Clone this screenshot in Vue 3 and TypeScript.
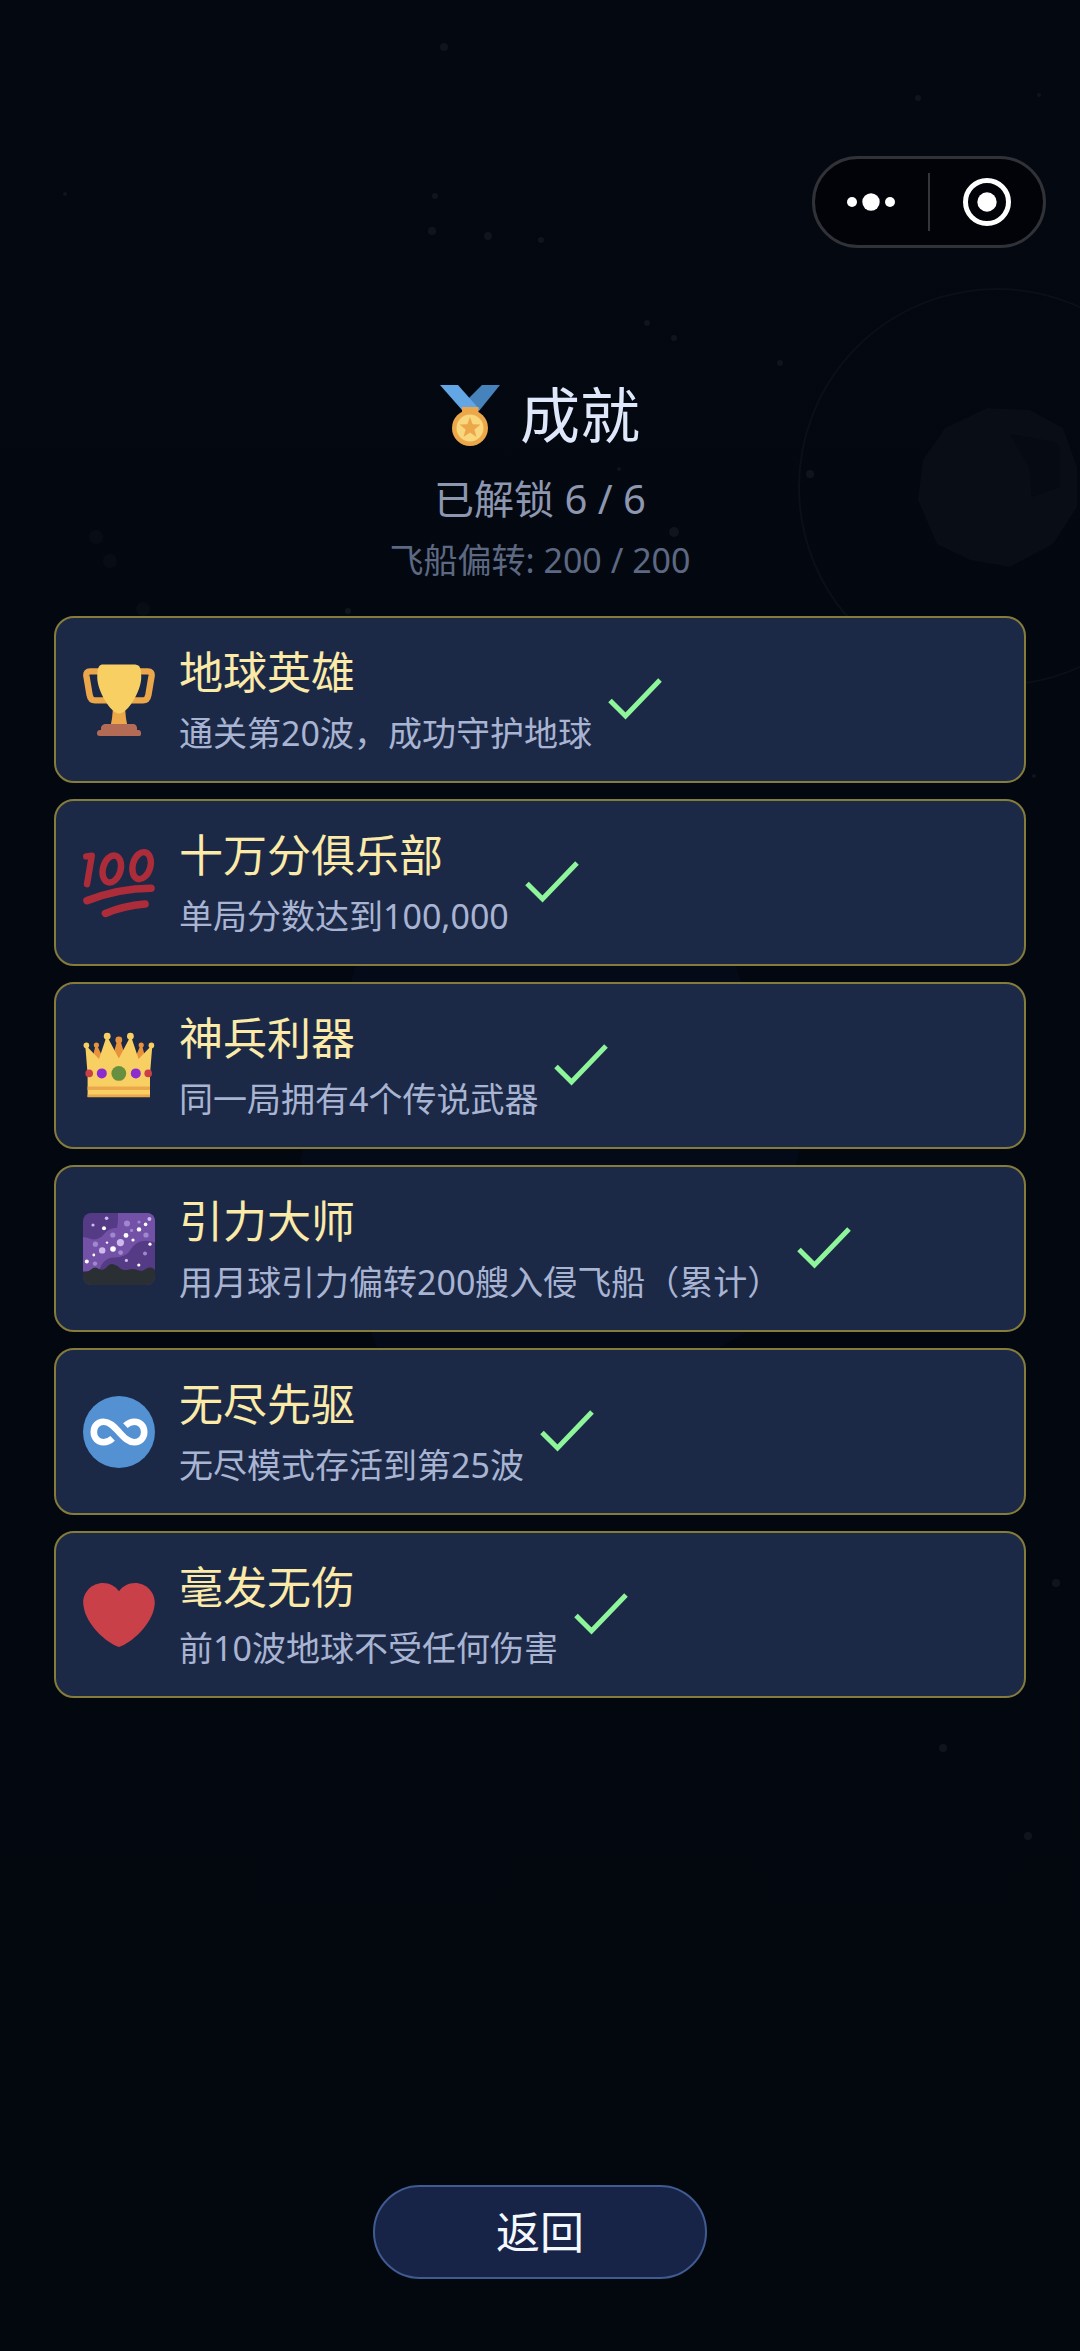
<script setup lang="ts">
interface Achievement {
  icon: string
  name: string
  detail: string
}

interface Star {
  x: number
  y: number
  r: number
  dim?: boolean
}

const achievements: Achievement[] = [
  { icon: 'trophy', name: '地球英雄', detail: '通关第20波，成功守护地球' },
  { icon: 'hundred', name: '十万分俱乐部', detail: '单局分数达到100,000' },
  { icon: 'crown', name: '神兵利器', detail: '同一局拥有4个传说武器' },
  { icon: 'galaxy', name: '引力大师', detail: '用月球引力偏转200艘入侵飞船（累计）' },
  { icon: 'infinity', name: '无尽先驱', detail: '无尽模式存活到第25波' },
  { icon: 'heart', name: '毫发无伤', detail: '前10波地球不受任何伤害' },
]

const stars: Star[] = [
  { x: 444, y: 47, r: 4 }, { x: 918, y: 98, r: 3 }, { x: 1039, y: 95, r: 2 },
  { x: 65, y: 194, r: 2 }, { x: 435, y: 196, r: 3 }, { x: 432, y: 231, r: 4 },
  { x: 488, y: 236, r: 4 }, { x: 541, y: 240, r: 3 }, { x: 647, y: 323, r: 3 },
  { x: 674, y: 338, r: 3 }, { x: 780, y: 363, r: 3 }, { x: 810, y: 474, r: 4 },
  { x: 619, y: 469, r: 2 }, { x: 674, y: 532, r: 5 }, { x: 110, y: 561, r: 7, dim: true },
  { x: 96, y: 537, r: 7, dim: true }, { x: 143, y: 609, r: 7, dim: true },
  { x: 348, y: 611, r: 3 }, { x: 1056, y: 1583, r: 4 }, { x: 943, y: 1748, r: 4 },
  { x: 1028, y: 1836, r: 4 }, { x: 1034, y: 776, r: 2 },
]
</script>

<template>
  <main class="page">
    <svg class="space" viewBox="0 0 1080 2351" preserveAspectRatio="xMidYMin slice" aria-hidden="true">
      <circle v-for="(s, i) in stars" :key="i" :cx="s.x" :cy="s.y" :r="s.r" :fill="s.dim ? '#080d15' : '#10151d'" />
      <circle cx="997" cy="487" r="198" fill="none" stroke="#0a1017" stroke-width="2" />
      <path fill="#080d16" d="M918 500l5-40 22-32 42-20 43 2 33 18 14 39v40l-24 37-43 23-40-7-33-16z" />
      <path fill="#060b13" d="M1010 434l45 8 5 5v40l-28 10-3-30z" />
      <path fill="#040a17" d="M300 1160l60-210 180-100 190 100 70 200-50 180-190 110-170-60z" />
    </svg>

    <nav class="topbar">
      <div class="capsule">
        <button type="button" class="cap-btn" aria-label="更多">
          <svg width="50" height="48" viewBox="0 0 50 48" fill="#fff">
            <circle cx="5" cy="24" r="5" /><circle cx="24" cy="24" r="8.700" /><circle cx="43" cy="24" r="5" />
          </svg>
        </button>
        <span class="divider"></span>
        <button type="button" class="cap-btn" aria-label="关闭">
          <svg width="48" height="48" viewBox="0 0 48 48">
            <circle cx="24" cy="24" r="21.500" fill="none" stroke="#fff" stroke-width="5" />
            <circle cx="24" cy="24" r="9.700" fill="#fff" />
          </svg>
        </button>
      </div>
    </nav>

    <header class="head">
      <h1 class="title">
        <svg width="60" height="62" viewBox="0 0 60 62" aria-hidden="true">
          <path fill="#4683bd" d="M42 1h18L39 27 28 15z" />
          <path fill="#63a6e6" d="M0 1h18l22 25H22z" />
          <path fill="#eca74b" d="M22 23h16.500v6H22z" />
          <circle cx="30" cy="44" r="18" fill="#eca74b" />
          <circle cx="30" cy="44" r="13.500" fill="#f9d77c" />
          <path fill="#eca74b" d="M30 33l2.700 7.300 7.800.3-6.100 4.800 2.100 7.500L30 48.600l-6.500 4.300 2.100-7.500-6.100-4.800 7.800-.3z" />
        </svg>
        <span>成就</span>
      </h1>
      <p class="unlocked">已解锁 6 / 6</p>
      <p class="deflected">飞船偏转: 200 / 200</p>
    </header>

    <ul class="list">
      <li v-for="a in achievements" :key="a.name" class="card">
        <svg class="icon" viewBox="0 0 36 36" aria-hidden="true">
          <g v-if="a.icon === 'trophy'">
            <path fill="none" stroke="#eca74b" stroke-width="3.200" stroke-linejoin="round" d="M9 3.700H3.600Q1.400 3.700 1.700 6L3.300 15.500Q3.800 18.200 6 18.200H13M27 3.700h5.400q2.200 0 1.900 2.300l-1.600 9.500q-.5 2.700-2.700 2.700H23" />
            <path fill="#eca74b" d="M15 22h6q.3 5 1.200 9h-8.400q.9-4 1.200-9z" />
            <path fill="#f8cf62" d="M29.123 6.577c0 6.775-6.770 18.192-11 18.192-4.231 0-11-11.417-11-18.192 0-5.195 1-6.319 3-6.319 1.374 0 6.025-.027 8-.027l7-.001c2.917-.001 4 .684 4 6.347z" />
            <path fill="#b36b56" d="M27 33H9v-1c0-1.104 1.164-2 2.206-2h13.917c1.042 0 1.877.896 1.877 2z" />
            <path fill="#b36b56" d="M29 34.625c0 .760.165 1.375-1.252 1.375H8.498C7.206 36 7 35.385 7 34.625v-.250C7 33.615 7.738 33 8.498 33h19.250c.759 0 1.252.615 1.252 1.375z" />
          </g>
          <g v-else-if="a.icon === 'hundred'" fill="none" stroke="#ad2c3a" stroke-width="3.200" stroke-linecap="round" stroke-linejoin="round">
            <path d="M1.600 4.700L4.400 4.400 2 18.600" />
            <ellipse cx="14.400" cy="11" rx="4.400" ry="6.900" transform="rotate(16 14.400 11)" />
            <ellipse cx="29.300" cy="9.300" rx="4.400" ry="6.900" transform="rotate(16 29.300 9.300)" />
            <path stroke-width="3.800" d="M2 26.800Q18 20.600 34 20.600M11.200 33.200Q20 29.500 31 28.500" />
          </g>
          <g v-else-if="a.icon === 'crown'">
            <g fill="#e8923c">
              <circle cx="6.700" cy="7.500" r="1.300" /><circle cx="17.900" cy="5" r="1.700" /><circle cx="29.100" cy="7.500" r="1.300" />
              <path d="M4 17L6.200 8h1L10 14v5zM14 16l3.200-11h1.400L22 16zM32 17L29.600 8h-1L26 14v5z" />
            </g>
            <path fill="#f8cf62" d="M2.300 33.500V22L1.200 8.500l.8-.3L8 14.500 11.500 4h1L17.900 14.300 23.300 4h1L27.800 14.500 33.800 8.200l.8.300L33.500 22v11.500z" />
            <g fill="#f8cf62">
              <circle cx="1.700" cy="7.700" r="1.400" /><circle cx="12.100" cy="3.100" r="1.700" />
              <circle cx="23.700" cy="3.100" r="1.700" /><circle cx="34.200" cy="7.700" r="1.400" />
            </g>
            <path fill="#eca74b" d="M2.300 28.200h31.200v1.800H2.300zM2.300 32.200h31.200v1.400H2.300z" />
            <circle cx="3.100" cy="21.700" r="1.900" fill="#c94048" /><circle cx="32.600" cy="21.700" r="1.900" fill="#c94048" />
            <circle cx="9.400" cy="21.700" r="2.500" fill="#8b2bd0" /><circle cx="26.400" cy="21.700" r="2.500" fill="#8b2bd0" />
            <circle cx="17.900" cy="21.700" r="3.700" fill="#66903f" />
          </g>
          <g v-else-if="a.icon === 'galaxy'">
            <clipPath id="galaxy-frame"><rect width="36" height="36" rx="4" /></clipPath>
            <g clip-path="url(#galaxy-frame)">
              <path fill="#553a86" d="M0 0h36v36H0z" />
              <path fill="#7351a6" d="M17.500 0H36v14.800Q32 13 28 14.500 25 16 23 19.500 21 22 16 22.200 10 22 8 29H0V12q2 .3 4 1 4 1 7-3 2-2.500 6-2.600.7-3.400.5-7.400z" />
              <path fill="#292f33" d="M0 36v-6.500q2.500.2 4-1.300 2-1.800 4-.2 2 1 3.500-.5 2-2.600 4-1.800 2 .6 3.500 2.300 1.500 1 4 .2 3-.6 5 .6 2 .6 3.500-.9 2.500-1.500 4.500.6V36z" />
              <g fill="#a088d0">
                <circle cx="22" cy="5.300" r="1.500" /><circle cx="14.900" cy="11" r="1.300" /><circle cx="6.200" cy="15.600" r="1.300" />
                <circle cx="31.500" cy="11" r="1.300" /><circle cx="24.300" cy="8.700" r=".8" /><circle cx="28" cy="4.500" r=".8" />
                <circle cx="18.800" cy="19.800" r="1.200" /><circle cx="31" cy="20.300" r="1" /><circle cx="6" cy="25.300" r="1.100" />
              </g>
              <g fill="#ceb9ef">
                <circle cx="18.700" cy="14.800" r="1.800" /><circle cx="9.600" cy="18.700" r="1.600" />
                <circle cx="5" cy="6" r=".8" /><circle cx="11.800" cy="2.600" r=".9" /><circle cx="33.200" cy="3" r="1" />
                <circle cx="21.700" cy="23.700" r=".8" />
              </g>
              <g fill="#fff">
                <circle cx="10.500" cy="7.600" r="1" /><circle cx="21.500" cy="11.200" r="1.200" /><circle cx="28" cy="8.200" r="1.100" />
                <circle cx="31.300" cy="5.700" r=".9" /><circle cx="15" cy="18" r="1.400" /><circle cx="12" cy="14.800" r=".6" />
                <circle cx="25" cy="13.500" r=".8" /><circle cx="33.500" cy="15.600" r=".8" /><circle cx="5.400" cy="21" r=".7" />
                <circle cx="1.900" cy="24.200" r="1" /><circle cx="27.900" cy="26" r=".8" />
              </g>
            </g>
          </g>
          <g v-else-if="a.icon === 'infinity'">
            <circle cx="18" cy="18" r="18" fill="#5391d2" />
            <path fill="none" stroke="#fff" stroke-width="3.300" d="M14.800 21.200C13.300 22.600 12 23.100 10.300 23.100 7.300 23.100 5.400 20.800 5.400 18s1.900-5.100 4.900-5.100S15.400 15.200 18 18s4.700 5.100 7.700 5.100 4.900-2.300 4.900-5.100-1.900-5.100-4.900-5.100c-1.700 0-3 .5-4.500 1.900" />
          </g>
          <path v-else fill="#c94048" d="M35.885 11.833c0-5.450-4.418-9.868-9.867-9.868-3.308 0-6.227 1.633-8.018 4.129-1.791-2.496-4.710-4.129-8.017-4.129-5.450 0-9.868 4.417-9.868 9.868 0 .772.098 1.520.266 2.241C1.751 22.587 11.216 31.568 18 34.034c6.783-2.466 16.249-11.447 17.617-19.959.170-.721.268-1.469.268-2.242z" />
        </svg>
        <div class="info">
          <h2 class="name">{{ a.name }}</h2>
          <p class="detail">{{ a.detail }}</p>
        </div>
        <svg class="check" viewBox="0 0 54 44" role="img" aria-label="已完成">
          <path fill="none" stroke="#8ff59b" stroke-width="5" d="M2 22.500L17.500 38 52 2" />
        </svg>
      </li>
    </ul>

    <button type="button" class="back">返回</button>
  </main>
</template>

<style>
body {
  background: #030811;
}
</style>

<style scoped>
.page {
  position: relative;
  display: flex;
  flex-direction: column;
  align-items: center;
  box-sizing: border-box;
  min-height: 100vh;
  padding: 156px 5% 72px;
  overflow: hidden;
  background: linear-gradient(#030811, #03070e);
  font-family: "Noto Sans", "Noto Sans CJK SC", sans-serif;
}

.page > * {
  position: relative;
}

.page > .space {
  position: absolute;
  inset: 0;
  width: 100%;
  height: 100%;
}

h1,
h2,
p,
ul {
  margin: 0;
  padding: 0;
  font-weight: 400;
}

.topbar {
  display: flex;
  justify-content: flex-end;
  align-self: stretch;
  margin-right: -20px;
}

.capsule {
  display: flex;
  align-items: center;
  box-sizing: border-box;
  width: 234px;
  height: 92px;
  border: 3px solid #303237;
  border-radius: 46px;
  background: #020308;
}

.cap-btn {
  display: flex;
  flex: 1;
  align-items: center;
  justify-content: center;
  height: 100%;
  padding: 0;
  border: 0;
  background: none;
}

.divider {
  width: 2px;
  height: 58px;
  background: #34363b;
}

.head {
  display: flex;
  flex-direction: column;
  align-items: center;
  margin-top: 127px;
}

.title {
  display: flex;
  align-items: center;
  gap: 20px;
  color: #dfe7fa;
  font-size: 60px;
  line-height: 80px;
}

.unlocked {
  margin-top: 16px;
  color: #8d97b0;
  font-size: 40px;
  line-height: 56px;
}

.deflected {
  margin-top: 8px;
  color: #5d6982;
  font-size: 34px;
  line-height: 50px;
}

.list {
  display: flex;
  flex-direction: column;
  align-self: stretch;
  gap: 16px;
  margin-top: 31px;
  list-style: none;
}

.card {
  display: flex;
  align-items: center;
  box-sizing: border-box;
  min-height: 167px;
  padding: 0 27px;
  border: 2px solid #857c3c;
  border-radius: 20px;
  background: #1b2947;
}

.icon {
  flex: none;
  width: 72px;
  height: 72px;
}

.info {
  margin-left: 24px;
}

.name {
  color: #fbeaa8;
  font-size: 44px;
  line-height: 56px;
}

.detail {
  margin-top: 10px;
  color: #a8b4d2;
  font-size: 34px;
  line-height: 46px;
}

.check {
  flex: none;
  width: 54px;
  height: 44px;
  margin-left: 16px;
}

.back {
  box-sizing: border-box;
  width: 334px;
  height: 94px;
  margin-top: auto;
  padding: 0;
  border: 2px solid #3f5b90;
  border-radius: 47px;
  background: #172448;
  color: #f4f8ff;
  font-family: inherit;
  font-size: 44px;
  line-height: 60px;
}
</style>
